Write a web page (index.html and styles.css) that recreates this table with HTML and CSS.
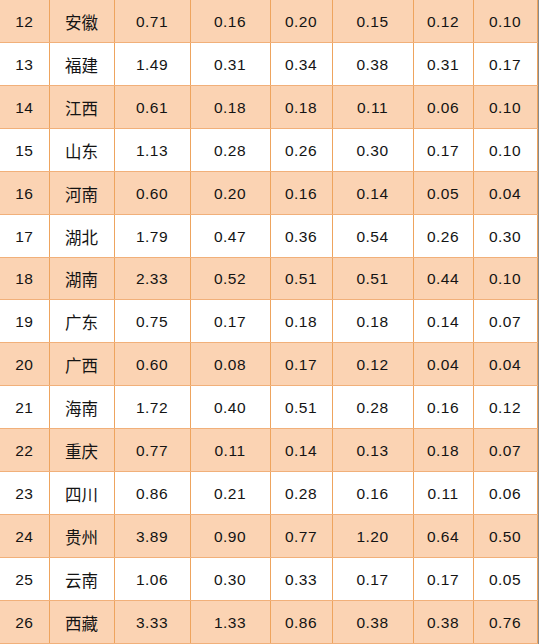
FILE: index.html
```html
<!DOCTYPE html>
<html lang="zh">
<head>
<meta charset="utf-8">
<link rel="stylesheet" href="styles.css">
</head>
<body>
<div class="wrap">
<table class="data">
<colgroup>
<col class="c1"><col class="c2"><col class="c3"><col class="c4"><col class="c5"><col class="c6"><col class="c7"><col class="c8">
</colgroup>
<tbody>
<tr class="hl"><td>12</td><td class="cn">安徽</td><td>0.71</td><td>0.16</td><td>0.20</td><td>0.15</td><td>0.12</td><td>0.10</td></tr>
<tr><td>13</td><td class="cn">福建</td><td>1.49</td><td>0.31</td><td>0.34</td><td>0.38</td><td>0.31</td><td>0.17</td></tr>
<tr class="hl"><td>14</td><td class="cn">江西</td><td>0.61</td><td>0.18</td><td>0.18</td><td>0.11</td><td>0.06</td><td>0.10</td></tr>
<tr><td>15</td><td class="cn">山东</td><td>1.13</td><td>0.28</td><td>0.26</td><td>0.30</td><td>0.17</td><td>0.10</td></tr>
<tr class="hl"><td>16</td><td class="cn">河南</td><td>0.60</td><td>0.20</td><td>0.16</td><td>0.14</td><td>0.05</td><td>0.04</td></tr>
<tr><td>17</td><td class="cn">湖北</td><td>1.79</td><td>0.47</td><td>0.36</td><td>0.54</td><td>0.26</td><td>0.30</td></tr>
<tr class="hl"><td>18</td><td class="cn">湖南</td><td>2.33</td><td>0.52</td><td>0.51</td><td>0.51</td><td>0.44</td><td>0.10</td></tr>
<tr><td>19</td><td class="cn">广东</td><td>0.75</td><td>0.17</td><td>0.18</td><td>0.18</td><td>0.14</td><td>0.07</td></tr>
<tr class="hl"><td>20</td><td class="cn">广西</td><td>0.60</td><td>0.08</td><td>0.17</td><td>0.12</td><td>0.04</td><td>0.04</td></tr>
<tr><td>21</td><td class="cn">海南</td><td>1.72</td><td>0.40</td><td>0.51</td><td>0.28</td><td>0.16</td><td>0.12</td></tr>
<tr class="hl"><td>22</td><td class="cn">重庆</td><td>0.77</td><td>0.11</td><td>0.14</td><td>0.13</td><td>0.18</td><td>0.07</td></tr>
<tr><td>23</td><td class="cn">四川</td><td>0.86</td><td>0.21</td><td>0.28</td><td>0.16</td><td>0.11</td><td>0.06</td></tr>
<tr class="hl"><td>24</td><td class="cn">贵州</td><td>3.89</td><td>0.90</td><td>0.77</td><td>1.20</td><td>0.64</td><td>0.50</td></tr>
<tr><td>25</td><td class="cn">云南</td><td>1.06</td><td>0.30</td><td>0.33</td><td>0.17</td><td>0.17</td><td>0.05</td></tr>
<tr class="hl"><td>26</td><td class="cn">西藏</td><td>3.33</td><td>1.33</td><td>0.86</td><td>0.38</td><td>0.38</td><td>0.76</td></tr>
</tbody>
</table>
</div>
</body>
</html>
```

FILE: styles.css
```css
html, body {
  margin: 0;
  padding: 0;
  background: #ffffff;
}

.wrap {
  width: 538px;
  border-right: 1px solid #8a8a8a;
  height: 644px;
  overflow: hidden;
}

.data {
  width: 537px;
  border-collapse: collapse;
  table-layout: fixed;
  font-family: "Liberation Sans", "Noto Sans CJK SC", sans-serif;
  font-size: 15.5px;
  color: #141414;
}

.c1 { width: 49px; }
.c2 { width: 65px; }
.c3 { width: 76px; }
.c4 { width: 80px; }
.c5 { width: 62px; }
.c6 { width: 81px; }
.c7 { width: 60px; }
.c8 { width: 64px; }

.data td {
  height: 39.93px;
  padding: 2px 0 0;
  text-align: center;
  vertical-align: middle;
  border-right: 1px solid #eea45e;
  border-bottom: 1px solid #f1b07a;
  letter-spacing: 0.5px;
  background: #ffffff;
}

.data tr.hl td {
  background: #fbd3b3;
}

.data td.cn {
  font-family: "Noto Sans CJK SC", sans-serif;
  font-size: 16.5px;
  letter-spacing: 0;
}
```
